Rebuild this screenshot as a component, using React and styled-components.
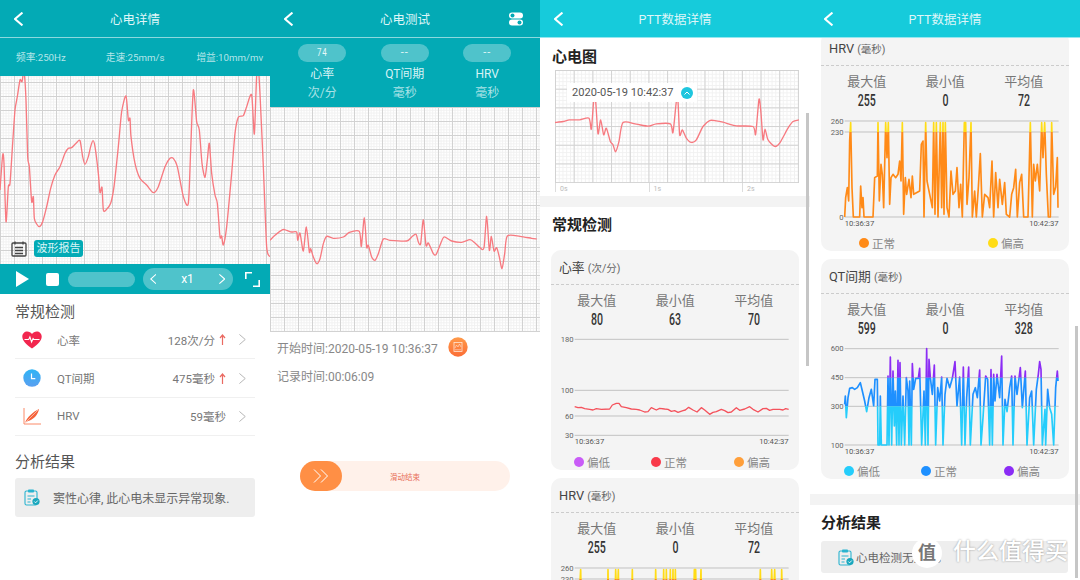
import { useId } from "react";
import styled, { createGlobalStyle } from "styled-components";

const CJK = `Roboto, "Noto Sans CJK SC", sans-serif`;
const TEAL = "#03aab5";
const CYAN = "#16cbdb";

const GlobalStyle = createGlobalStyle`
  html, body { margin: 0; padding: 0; background: #fff; }
  body { width: 1080px; height: 580px; overflow: hidden; font-family: ${CJK}; }
  * { box-sizing: border-box; }
`;

const Page = styled.div`
  display: grid;
  grid-template-columns: repeat(4, 270px);
  width: 1080px;
  height: 580px;
  overflow: hidden;
`;

const Screen = styled.section`
  position: relative;
  height: 580px;
  overflow: hidden;
  background: #fff;
`;

const Header = styled.header`
  position: relative;
  z-index: 2;
  display: grid;
  grid-template-columns: 1fr auto 1fr;
  align-items: center;
  height: 38px;
  padding: 0 14px;
  background: ${(p) => p.$bg};
  border-bottom: 1px solid rgba(255, 255, 255, 0.55);
  color: #def6f8;
  font-size: 12.5px;
`;

const HeaderEnd = styled.div`
  display: flex;
  justify-content: flex-end;
  padding-right: 3px;
`;

const InfoRow = styled.div`
  display: flex;
  align-items: center;
  height: 38px;
  padding-left: 16px;
  background: ${TEAL};
  color: #b5e6ea;
  font-size: 9.7px;
  white-space: nowrap;

  span:nth-child(2) {
    margin-left: 40px;
  }

  span:nth-child(3) {
    margin-left: 32px;
  }
`;

const Paper = styled.div`
  position: relative;
  height: ${(p) => p.$h}px;
  background-color: #fff;
  background-image:
    linear-gradient(to right, #d2d2d2 1px, transparent 1px),
    linear-gradient(to bottom, #d2d2d2 1px, transparent 1px),
    linear-gradient(to right, #f1f1f1 1px, transparent 1px),
    linear-gradient(to bottom, #f1f1f1 1px, transparent 1px);
  background-size:
    ${(p) => p.$major}px ${(p) => p.$major}px,
    ${(p) => p.$major}px ${(p) => p.$major}px,
    ${(p) => p.$major / 5}px ${(p) => p.$major / 5}px,
    ${(p) => p.$major / 5}px ${(p) => p.$major / 5}px;
  background-position: 0 ${(p) => p.$offsetY || 0}px;
`;

const TraceSvg = styled.svg`
  display: block;
  width: 100%;
  height: 100%;
`;

const NoteIcon = styled.div`
  position: absolute;
  left: 11px;
  top: 165px;
  width: 16px;
  height: 16px;

  svg {
    display: block;
  }
`;

const ReportBadge = styled.span`
  position: absolute;
  left: 34px;
  top: 164px;
  width: 49px;
  height: 17px;
  border-radius: 3px;
  background: ${TEAL};
  color: #d9f5f7;
  font-size: 11px;
  line-height: 17px;
  text-align: center;
  white-space: nowrap;
`;

const PlayBar = styled.div`
  display: flex;
  align-items: center;
  height: 30px;
  padding-left: 16px;
  background: ${TEAL};
`;

const PlayIcon = styled.div`
  width: 0;
  height: 0;
  border-left: 13px solid #fff;
  border-top: 8px solid transparent;
  border-bottom: 8px solid transparent;
`;

const StopIcon = styled.div`
  width: 13px;
  height: 13px;
  margin-left: 17px;
  border-radius: 2px;
  background: #fff;
`;

const ProgressPill = styled.div`
  width: 67px;
  height: 15px;
  margin-left: 9px;
  border-radius: 8px;
  background: rgba(255, 255, 255, 0.3);
`;

const SpeedPill = styled.div`
  display: flex;
  align-items: center;
  justify-content: space-between;
  width: 90px;
  height: 22px;
  margin-left: 8px;
  padding: 0 8px 0 7px;
  border-radius: 11px;
  background: rgba(255, 255, 255, 0.3);
  color: #fff;
  font-size: 12px;
`;

const FullIcon = styled.svg`
  width: 15px;
  height: 15px;
  margin-left: 12px;
`;

const SectionTitle = styled.h2`
  margin: 0;
  height: ${(p) => p.$h}px;
  padding-left: ${(p) => p.$left}px;
  color: ${(p) => (p.$strong ? "#222" : "#555")};
  font-size: 15px;
  font-weight: ${(p) => (p.$strong ? 700 : 400)};
  line-height: ${(p) => p.$line || p.$h}px;
`;

const CheckList = styled.div`
  margin: 0 15px;
`;

const CheckRow = styled.div`
  display: flex;
  align-items: center;
  height: 38.4px;
  border-bottom: 1.5px solid #f0f0f0;
  color: #777;
  font-size: 11.5px;
`;

const RowIcon = styled.div`
  display: flex;
  justify-content: center;
  width: 34px;
`;

const RowLabel = styled.span`
  flex: 1;
  margin-left: 8px;
`;

const UpArrow = styled.span`
  display: flex;
  margin-left: 4px;
`;

const RowChevron = styled.span`
  display: flex;
  margin: 0 9px 0 13px;
`;

const ResultBox = styled.div`
  display: flex;
  align-items: center;
  height: ${(p) => p.$h}px;
  margin: ${(p) => p.$margin};
  padding-left: ${(p) => p.$pad}px;
  gap: ${(p) => p.$gap}px;
  border-radius: 3px;
  background: #eee;
  color: #666;
  font-size: ${(p) => p.$size}px;
  white-space: nowrap;
`;

const Stats = styled.div`
  display: grid;
  grid-template-columns: repeat(3, 82.5px);
  height: 69px;
  padding-left: 11px;
  background: ${TEAL};
`;

const StatCol = styled.div`
  display: flex;
  flex-direction: column;
  align-items: center;
  color: #d8f3f5;
  font-size: 12px;
  line-height: 19px;
`;

const StatPill = styled.div`
  width: 48px;
  height: 18px;
  margin: 6px 0 3px;
  border-radius: 9px;
  background: rgba(255, 255, 255, 0.3);
  color: #e5f8f9;
  font-size: 11px;
  line-height: 18px;
  letter-spacing: 1px;
  text-align: center;
`;

const Condensed = styled.span`
  display: inline-block;
  transform: scaleX(${(p) => p.$x});
`;

const StatUnit = styled.span`
  color: #a9e2e6;
`;

const TimeLine = styled.div`
  display: flex;
  align-items: center;
  gap: 10px;
  height: 28px;
  padding-left: 7px;
  color: #888;
  font-size: 12px;
  white-space: nowrap;
`;

const TimeBlock = styled.div`
  padding-top: 1px;
`;

const SlideTrack = styled.div`
  display: flex;
  align-items: center;
  width: 210px;
  height: 30px;
  margin: 72px 0 0 30px;
  border-radius: 15px;
  background: #fff1ea;
`;

const SlideThumb = styled.div`
  display: flex;
  align-items: center;
  justify-content: center;
  width: 42px;
  height: 30px;
  border-radius: 15px;
  background: #ff8f45;
`;

const SlideLabel = styled.span`
  flex: 1;
  padding-right: 42px;
  color: #e8705a;
  font-size: 7.5px;
  text-align: center;
`;

const EcgPanel = styled.div`
  width: 244px;
  margin-left: 15px;
`;

const TimeTip = styled.div`
  position: absolute;
  left: 12px;
  top: 13px;
  display: flex;
  align-items: center;
  gap: 7px;
  height: 19px;
  padding: 0 4px 0 5px;
  background: #fff;
  color: #555;
  font-size: 11.1px;
  white-space: nowrap;
`;

const TipDot = styled.span`
  display: flex;
  align-items: center;
  justify-content: center;
  width: 12px;
  height: 12px;
  border-radius: 50%;
  background: #1fc6de;
`;

const AxisRow = styled.div`
  display: flex;
  height: 9px;
`;

const AxisTick = styled.span`
  flex: none;
  width: 93.5px;
  padding: 3px 0 0 4px;
  border-left: 1px solid #ddd;
  color: #bbb;
  font-size: 7px;
  line-height: 7px;

  &:last-child {
    width: 57px;
  }
`;

const Band = styled.div`
  height: ${(p) => p.$h}px;
  margin-top: ${(p) => p.$top}px;
  background: #f3f3f3;
`;

const CardStack = styled.div`
  display: flex;
  flex-direction: column;
  gap: 8px;
  margin: ${(p) => p.$top || 0}px 0 0 11px;
  width: 248px;
`;

const Card = styled.article`
  height: 220px;
  border-radius: 10px;
  background: #f4f4f4;
`;

const CardHead = styled.div`
  height: 35px;
  padding: 0 8px;
  border-bottom: 1px dashed #ccc;
  color: #444;
  font-size: 12.8px;
  line-height: 35px;
`;

const CardUnit = styled.span`
  color: #666;
  font-size: 10.5px;
`;

const CardStats = styled.div`
  display: grid;
  grid-template-columns: repeat(3, 78.5px);
  height: 45px;
  padding: 6px 0 0 6.5px;
  text-align: center;
`;

const CardStatLabel = styled.div`
  color: #777;
  font-size: 13px;
  line-height: 19px;
`;

const CardStatValue = styled.div`
  color: #333;
  font-size: 16px;
  font-weight: 500;
  line-height: 20px;
`;

const ChartSvg = styled.svg`
  display: block;
  width: 248px;
  height: 125px;
`;

const Legend = styled.div`
  display: flex;
  justify-content: space-between;
  align-items: center;
  height: 15px;
  margin-top: -1px;
  padding: ${(p) => (p.$two ? "0 45px 0 38px" : "0 29px 0 23px")};
`;

const LegendItem = styled.span`
  display: flex;
  align-items: center;
  gap: 3px;
  color: #888;
  font-size: 11.5px;

  &:nth-child(2):not(:last-child) {
    margin-right: 6px;
  }
`;

const LegendDot = styled.i`
  width: 10px;
  height: 10px;
  border-radius: 50%;
  background: ${(p) => p.$color};
`;

const ScrollThumb = styled.div`
  position: absolute;
  left: ${(p) => p.$left}px;
  top: ${(p) => p.$top}px;
  width: 3px;
  height: ${(p) => p.$h}px;
  background: #c6c6c6;
`;

const WatermarkBadge = styled.div`
  position: absolute;
  left: 102px;
  top: 538px;
  z-index: 3;
  width: 30px;
  height: 30px;
  border-radius: 50%;
  background: #fff;
  color: #777;
  font-size: 18px;
  font-weight: 700;
  line-height: 30px;
  text-align: center;
`;

const WatermarkText = styled.div`
  position: absolute;
  left: 143px;
  top: 538px;
  z-index: 3;
  color: #fff;
  font-size: 23px;
  font-weight: 500;
  line-height: 28px;
  text-shadow: 0 0 2px rgba(0, 0, 0, 0.4);
  white-space: nowrap;
`;

const ecgDetail = "0,570 8,465 12,490 18,665 25,560 30,550 38,430 45,330 52,290 60,240 66,245 72,215 78,300 83,470 88,500 95,605 100,590 103,655 110,672 118,680 128,665 140,620 152,565 165,525 180,500 195,460 205,445 215,443 228,430 240,422 248,470 255,493 265,470 272,440 279,422 285,440 295,520 300,578 306,562 310,630 318,630 332,610 342,560 355,440 365,335 378,288 385,360 390,355 393,410 405,490 420,535 440,555 460,578 475,560 495,500 510,475 520,475 532,500 550,590 565,610 572,450 580,270 590,365 598,390 606,490 615,532 622,480 628,430 635,520 645,585 652,610 660,710 665,708 670,735 680,680 695,520 705,400 715,352 730,347 740,320 755,285 763,402 770,228 777,228 790,500 800,740 810,770";

const ecgTest = "0,720 15,705 38,688 50,690 65,695 80,695 83,720 90,698 100,752 109,680 118,755 122,745 130,770 140,790 150,775 160,730 170,708 190,714 220,710 238,696 268,693 274,738 283,652 290,740 295,735 305,770 315,780 325,760 340,716 360,720 410,722 425,710 438,702 445,725 452,730 460,658 468,735 475,728 490,760 498,763 510,735 522,710 545,722 575,726 600,718 615,728 630,742 642,742 650,648 658,750 664,708 672,752 680,742 688,770 696,805 704,760 712,707 750,708 785,714 800,716";

const ecgPtt = "46,368 70,365 90,360 120,360 148,355 155,388 162,305 168,305 175,402 183,360 192,405 200,385 212,425 220,435 228,456 238,425 250,368 290,373 325,379 350,372 392,372 400,398 410,305 415,305 420,405 428,390 440,415 455,428 470,420 490,380 510,362 530,363 550,367 590,378 640,380 648,403 658,298 664,340 670,420 676,388 685,420 705,440 720,430 745,385 760,365 778,360";

const hrSeries = "105,350 115,353 125,352 135,356 150,358 160,360 170,356 185,358 210,357 218,345 230,340 238,340 245,350 260,353 275,357 290,358 300,360 315,366 325,365 335,353 350,360 360,355 375,357 385,358 395,364 405,362 415,367 430,362 437,360 447,352 460,360 472,366 485,353 495,360 510,373 520,367 530,365 545,358 555,362 565,368 575,366 590,353 600,361 615,357 630,350 640,358 655,366 670,356 680,355 690,361 700,358 720,358 730,360 738,356 747,358";

const hrvSeries = "105,648 108,590 113,560 117,600 120,420 123,365 127,560 131,648 150,648 153,555 157,620 160,590 163,648 190,648 195,530 203,525 205,365 209,600 214,490 218,520 222,620 228,365 232,470 236,365 240,610 244,530 250,520 258,530 265,520 270,480 274,540 278,365 282,640 287,530 291,580 298,535 304,590 308,525 312,580 330,570 335,430 340,420 343,648 348,365 352,540 362,590 368,620 372,365 376,640 380,365 385,648 392,365 396,620 400,365 403,640 407,365 412,620 418,648 424,510 430,580 437,570 442,500 448,620 453,550 458,648 464,365 468,365 472,610 478,530 484,365 488,648 495,570 500,648 506,560 512,458 518,648 525,580 535,590 540,620 547,480 552,648 558,515 565,620 570,535 578,610 585,545 590,640 600,648 606,580 612,560 618,505 623,648 630,545 636,520 642,648 655,648 662,365 668,648 672,490 677,540 683,490 690,570 696,365 700,470 705,365 710,520 716,648 722,648 726,365 732,580 738,558 743,470 745,620";

const qtSeries = "105,340 107,315 110,380 115,320 120,292 128,290 135,295 143,290 152,275 158,300 165,330 171,362 178,320 185,295 192,345 196,265 203,265 205,462 210,462 212,315 215,462 232,462 235,255 238,462 242,198 246,462 250,240 254,405 257,300 261,462 265,208 268,462 271,215 275,462 280,315 285,462 290,260 295,300 298,462 300,270 305,462 308,218 312,295 318,262 326,262 330,232 336,462 343,300 347,462 351,173 355,462 358,205 362,260 368,310 374,222 378,462 384,290 390,330 396,258 400,462 406,310 412,262 420,290 428,262 436,212 442,345 450,258 456,462 461,228 466,462 471,320 477,228 482,462 490,310 497,290 503,320 510,237 514,462 520,380 528,255 534,265 540,462 544,236 548,462 552,250 556,330 562,250 570,320 576,195 580,462 586,325 592,362 600,290 606,255 610,462 616,255 622,310 632,230 638,350 647,240 652,462 660,320 666,300 672,462 680,295 686,250 690,212 694,235 698,462 706,355 708,462 714,295 720,350 726,370 732,462 738,290 743,240 745,270";

const hrChart = {
  top: 120,
  stroke: 4,
  lines: [[148, "180"], [301, "100"], [378, "60"], [436, "30"]],
  series: hrSeries,
  bands: [[0, 999, "#f4525c"]],
};

const hrvChart = {
  top: 330,
  stroke: 5,
  lines: [[360, "260"], [393, "230"], [648, "0"]],
  series: hrvSeries,
  bands: [[0, 393, "#ffdc16"], [393, 999, "#ff8a17"]],
};

const qtChart = {
  top: 144,
  stroke: 5,
  lines: [[173, "600"], [260, "450"], [346, "300"], [462, "100"]],
  series: qtSeries,
  bands: [[0, 260, "#8b2cf5"], [260, 346, "#1e90ff"], [346, 999, "#25cdfb"]],
};

// rounds the traced ecg points into a soft curve
function smoothPath(points) {
  const p = points.split(" ").map((s) => s.split(",").map(Number));
  let d = `M${p[0]}`;
  for (let i = 0; i < p.length - 1; i++) {
    const a = p[i - 1] || p[i];
    const b = p[i];
    const c = p[i + 1];
    const e = p[i + 2] || c;
    d += `C${b[0] + (c[0] - a[0]) / 8},${b[1] + (c[1] - a[1]) / 8} ${c[0] - (e[0] - b[0]) / 8},${c[1] - (e[1] - b[1]) / 8} ${c[0]},${c[1]}`;
  }
  return d;
}

const Chevron = ({ dir = "left", size = 14, color = "#fff", width = 2 }) => (
  <svg width={size * 0.64} height={size} viewBox="0 0 9 14" fill="none" stroke={color} strokeWidth={width}>
    <polyline points={dir === "left" ? "8.5,0.5 1,7 8.5,13.5" : "0.5,0.5 8,7 0.5,13.5"} />
  </svg>
);

const RedUp = () => (
  <UpArrow>
    <svg width="7" height="11" viewBox="0 0 7 11" fill="none" stroke="#ea6a62" strokeWidth="1.2">
      <path d="M3.5 11V1M1 4l2.5-3L6 4" />
    </svg>
  </UpArrow>
);

const HeartIcon = () => (
  <svg width="20" height="18" viewBox="0 0 20 18">
    <path d="M10 17.5C4 13 .3 9.6.3 5.4.3 2.5 2.6.4 5.2.4 7.2.4 9 1.4 10 3c1-1.6 2.8-2.6 4.8-2.6 2.6 0 4.9 2.1 4.9 5 0 4.2-3.7 7.6-9.7 12.1z" fill="#f2264e" />
    <path d="M2.5 8.5h4.2l1.2-2.500 1.700 5 1.500-3.500.8 1h5.600" fill="none" stroke="#fff" strokeWidth="1.1" />
  </svg>
);

const ClockIcon = () => (
  <svg width="18" height="18" viewBox="0 0 18 18">
    <defs>
      <linearGradient id="clockFill" x1="0" y1="0" x2="0" y2="1">
        <stop offset="0" stopColor="#2fb4f5" />
        <stop offset="1" stopColor="#5a9ff0" />
      </linearGradient>
    </defs>
    <circle cx="9" cy="9" r="8.7" fill="url(#clockFill)" />
    <path d="M8.5 4.5v5.2h3.800" fill="none" stroke="#fff" strokeWidth="1.2" />
  </svg>
);

const HrvIcon = () => (
  <svg width="18" height="17" viewBox="0 0 18 17">
    <path d="M1 0v16h17" fill="none" stroke="#fb8a68" strokeWidth="1" />
    <path d="M2 15C4 9 10 4 16 1c-1 6-6 11-11 12z" fill="#f5623a" />
    <path d="M2 15L15 2" stroke="#fff" strokeWidth="0.5" />
  </svg>
);

const ClipCheckIcon = () => (
  <svg width="16" height="17" viewBox="0 0 16 17">
    <rect x="1" y="2" width="12" height="14" rx="1.5" fill="none" stroke="#2ab4d0" strokeWidth="1.1" />
    <rect x="4" y="0.6" width="6" height="3" rx="0.8" fill="#2ab4d0" />
    <path d="M3.5 7h7M3.5 10h3.500M3.5 13h3" stroke="#2ab4d0" strokeWidth="1" />
    <circle cx="12" cy="12.5" r="3.6" fill="#19a7bd" />
    <path d="M10.3 12.5l1.300 1.300 2.200-2.300" fill="none" stroke="#fff" strokeWidth="0.9" />
  </svg>
);

const Clipboard = () => (
  <svg viewBox="0 0 16 16" fill="none" stroke="#444" strokeWidth="1.3">
    <rect x="1" y="2" width="14" height="13" rx="1" />
    <path d="M4 0.5v3M12 0.5v3M4 6.5h8M4 9.5h8M4 12.5h8" />
  </svg>
);

const LogButton = () => (
  <svg width="20" height="20" viewBox="0 0 20 20">
    <defs>
      <linearGradient id="logFill" x1="0" y1="0" x2="0" y2="1">
        <stop offset="0" stopColor="#ff9a4a" />
        <stop offset="1" stopColor="#fb6d36" />
      </linearGradient>
    </defs>
    <circle cx="10" cy="10" r="9.7" fill="url(#logFill)" />
    <rect x="6" y="5.5" width="8" height="9" fill="none" stroke="#ffe6d6" strokeWidth="0.8" />
    <path d="M7 11l1.500-3 1.500 2 1.500-3L13 10M7 12.800h6" fill="none" stroke="#ffe6d6" strokeWidth="0.6" />
  </svg>
);

const Trace = ({ box, points }) => (
  <TraceSvg viewBox={box} preserveAspectRatio="none">
    <path d={smoothPath(points)} fill="none" stroke="#f77a80" strokeWidth="4" strokeLinejoin="round" />
  </TraceSvg>
);

function MetricChart({ chart }) {
  const uid = useId().replace(/[^a-zA-Z0-9]/g, "");
  const { top, stroke, lines, series, bands } = chart;
  const floor = lines[lines.length - 1][0];

  return (
    <ChartSvg viewBox={`34 ${top} 744 375`}>
      <defs>
        {bands.map(([from, to], i) => (
          <clipPath id={`${uid}b${i}`} key={i}>
            <rect x="34" y={from} width="744" height={to - from} />
          </clipPath>
        ))}
      </defs>
      {lines.map(([y, label]) => (
        <g key={label}>
          <line x1="105" x2="747" y1={y} y2={y} stroke="#b8b8b8" strokeWidth="2.5" />
          <text x="102" y={y + 8} textAnchor="end" fontSize="23" fill="#666" fontFamily="Roboto, sans-serif">
            {label}
          </text>
        </g>
      ))}
      {bands.map(([, , color], i) => (
        <polyline
          key={color}
          points={series}
          fill="none"
          stroke={color}
          strokeWidth={stroke}
          strokeLinejoin="round"
          clipPath={`url(#${uid}b${i})`}
        />
      ))}
      <text x="105" y={floor + 26} fontSize="23" fill="#555" fontFamily="Roboto, sans-serif">10:36:37</text>
      <text x="747" y={floor + 26} textAnchor="end" fontSize="23" fill="#555" fontFamily="Roboto, sans-serif">10:42:37</text>
    </ChartSvg>
  );
}

function MetricCard({ name, unit, stats, chart, legend }) {
  return (
    <Card>
      <CardHead>
        {name} <CardUnit>({unit})</CardUnit>
      </CardHead>
      <CardStats>
        {[["最大值", stats[0]], ["最小值", stats[1]], ["平均值", stats[2]]].map(([label, value]) => (
          <div key={label}>
            <CardStatLabel>{label}</CardStatLabel>
            <CardStatValue>
              <Condensed $x={0.66}>{value}</Condensed>
            </CardStatValue>
          </div>
        ))}
      </CardStats>
      <MetricChart chart={chart} />
      <Legend $two={legend.length === 2}>
        {legend.map(([label, color]) => (
          <LegendItem key={label}>
            <LegendDot $color={color} />
            {label}
          </LegendItem>
        ))}
      </Legend>
    </Card>
  );
}

const hrCard = {
  name: "心率",
  unit: "次/分",
  stats: [80, 63, 70],
  chart: hrChart,
  legend: [["偏低", "#c95cf7"], ["正常", "#f93a4a"], ["偏高", "#ff9f3a"]],
};

const hrvCard = {
  name: "HRV",
  unit: "毫秒",
  stats: [255, 0, 72],
  chart: hrvChart,
  legend: [["正常", "#ff8a17"], ["偏高", "#ffdc16"]],
};

const qtCard = {
  name: "QT间期",
  unit: "毫秒",
  stats: [599, 0, 328],
  chart: qtChart,
  legend: [["偏低", "#25cdfb"], ["正常", "#1e90ff"], ["偏高", "#8b2cf5"]],
};

const checks = [
  { icon: <HeartIcon />, label: "心率", value: "128次/分", high: true },
  { icon: <ClockIcon />, label: "QT间期", value: "475毫秒", high: true },
  { icon: <HrvIcon />, label: "HRV", value: "59毫秒", high: false },
];

function DetailScreen() {
  return (
    <Screen>
      <Header $bg={TEAL}>
        <Chevron />
        <span>心电详情</span>
      </Header>
      <InfoRow>
        <span>频率:250Hz</span>
        <span>走速:25mm/s</span>
        <span>增益:10mm/mv</span>
      </InfoRow>
      <Paper $h={188} $major={14} $offsetY={6}>
        <Trace box="0 228 810 564" points={ecgDetail} />
        <NoteIcon>
          <Clipboard />
        </NoteIcon>
        <ReportBadge>波形报告</ReportBadge>
      </Paper>
      <PlayBar>
        <PlayIcon />
        <StopIcon />
        <ProgressPill />
        <SpeedPill>
          <Chevron size={10} width={1.5} />
          <span>x1</span>
          <Chevron dir="right" size={10} width={1.5} />
        </SpeedPill>
        <FullIcon viewBox="0 0 15 15" fill="none" stroke="#fff" strokeWidth="1.6">
          <path d="M.8 7V.8H7M14.2 8v6.200H8" />
        </FullIcon>
      </PlayBar>
      <SectionTitle $h={27} $left={15} $line={36}>常规检测</SectionTitle>
      <CheckList>
        {checks.map((row) => (
          <CheckRow key={row.label}>
            <RowIcon>{row.icon}</RowIcon>
            <RowLabel>{row.label}</RowLabel>
            <span>{row.value}</span>
            {row.high && <RedUp />}
            <RowChevron>
              <Chevron dir="right" size={11} color="#aaa" width={1.1} />
            </RowChevron>
          </CheckRow>
        ))}
      </CheckList>
      <SectionTitle $h={42} $left={15} $line={52}>分析结果</SectionTitle>
      <ResultBox $h={39} $margin="0 15px" $pad={9} $gap={13} $size={12}>
        <ClipCheckIcon />
        窦性心律, 此心电未显示异常现象.
      </ResultBox>
    </Screen>
  );
}

function TestScreen() {
  return (
    <Screen>
      <Header $bg={TEAL}>
        <Chevron />
        <span>心电测试</span>
        <HeaderEnd>
          <svg width="14" height="14" viewBox="0 0 14 14">
            <rect y="0.5" width="14" height="6" rx="3" fill="#fff" />
            <circle cx="3.5" cy="3.5" r="2" fill={TEAL} />
            <rect y="7.5" width="14" height="6" rx="3" fill="#fff" />
            <circle cx="10.5" cy="10.5" r="2" fill={TEAL} />
          </svg>
        </HeaderEnd>
      </Header>
      <Stats>
        <StatCol>
          <StatPill>
            <Condensed $x={0.72}>74</Condensed>
          </StatPill>
          <span>心率</span>
          <StatUnit>次/分</StatUnit>
        </StatCol>
        <StatCol>
          <StatPill>--</StatPill>
          <span>QT间期</span>
          <StatUnit>毫秒</StatUnit>
        </StatCol>
        <StatCol>
          <StatPill>--</StatPill>
          <span>HRV</span>
          <StatUnit>毫秒</StatUnit>
        </StatCol>
      </Stats>
      <Paper $h={225} $major={14}>
        <Trace box="0 320 810 675" points={ecgTest} />
      </Paper>
      <TimeBlock>
        <TimeLine>
          开始时间:2020-05-19 10:36:37
          <LogButton />
        </TimeLine>
        <TimeLine>记录时间:00:06:09</TimeLine>
      </TimeBlock>
      <SlideTrack>
        <SlideThumb>
          <svg width="16" height="14" viewBox="0 0 16 14" fill="none" stroke="#fff" strokeWidth="1">
            <path d="M1 .5L7.5 7 1 13.5M8 .5L14.5 7 8 13.5" />
          </svg>
        </SlideThumb>
        <SlideLabel>滑动结束</SlideLabel>
      </SlideTrack>
    </Screen>
  );
}

function PttScreen() {
  return (
    <Screen>
      <Header $bg={CYAN}>
        <Chevron />
        <span>PTT数据详情</span>
      </Header>
      <SectionTitle $h={32} $left={12} $line={38} $strong>心电图</SectionTitle>
      <EcgPanel>
        <Paper $h={113} $major={18.7}>
          <Trace box="46 210 732 340" points={ecgPtt} />
          <TimeTip>
            2020-05-19 10:42:37
            <TipDot>
              <svg width="6" height="4" viewBox="0 0 6 4" fill="none" stroke="#fff" strokeWidth="1">
                <path d="M.5 3.5L3 1l2.5 2.5" />
              </svg>
            </TipDot>
          </TimeTip>
        </Paper>
        <AxisRow>
          <AxisTick>0s</AxisTick>
          <AxisTick>1s</AxisTick>
          <AxisTick>2s</AxisTick>
        </AxisRow>
      </EcgPanel>
      <Band $h={11} $top={4} />
      <SectionTitle $h={43} $left={12} $line={36} $strong>常规检测</SectionTitle>
      <CardStack>
        <MetricCard {...hrCard} />
        <MetricCard {...hrvCard} />
      </CardStack>
      <ScrollThumb $left={266} $top={113} $h={253} />
    </Screen>
  );
}

function PttResultScreen() {
  return (
    <Screen>
      <Header $bg={CYAN}>
        <Chevron />
        <span>PTT数据详情</span>
      </Header>
      <CardStack $top={-7}>
        <MetricCard {...hrvCard} />
        <MetricCard {...qtCard} />
      </CardStack>
      <Band $h={11} $top={15} />
      <SectionTitle $h={36} $left={11} $strong>分析结果</SectionTitle>
      <ResultBox $h={32} $margin="0 12px 0 11px" $pad={17} $gap={2} $size={11.5}>
        <ClipCheckIcon />
        心电检测无异常。
      </ResultBox>
      <ScrollThumb $left={265} $top={326} $h={252} />
      <WatermarkBadge>值</WatermarkBadge>
      <WatermarkText>什么值得买</WatermarkText>
    </Screen>
  );
}

export default function App() {
  return (
    <>
      <GlobalStyle />
      <Page>
        <DetailScreen />
        <TestScreen />
        <PttScreen />
        <PttResultScreen />
      </Page>
    </>
  );
}
